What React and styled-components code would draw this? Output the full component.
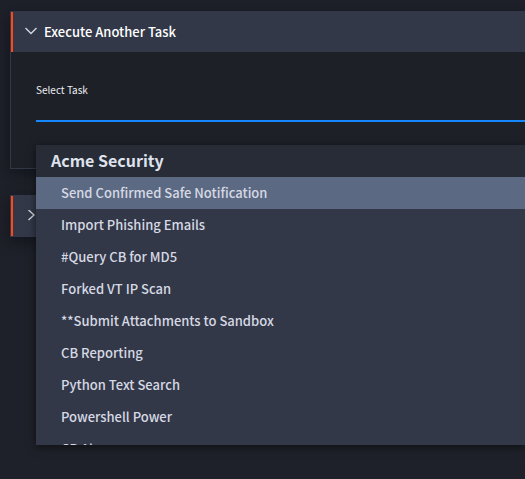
import React, { useState } from "react";
import styled, { createGlobalStyle } from "styled-components";

const GlobalStyle = createGlobalStyle`
  * { box-sizing: border-box; }
  body {
    margin: 0;
    background: #1e2129;
    color: #ffffff;
    font-family: "Noto Sans CJK JP", "Noto Sans", sans-serif;
    overflow: hidden;
  }
`;

const Page = styled.main`
  display: flex;
  flex-direction: column;
  gap: 26px;
  min-height: 100vh;
  padding: 11px 0 0 10px;
`;

const Panel = styled.section`
  border: 1px solid #323848;
  border-right: 0;
  background: #1d2027;
  box-shadow: 0 4px 14px rgba(10, 12, 18, 0.6);
`;

const PanelToggle = styled.button`
  display: flex;
  align-items: center;
  gap: 7px;
  width: 100%;
  height: 40px;
  padding: 0 12px;
  border: 0;
  border-left: 2px solid #ff4719;
  background: #323848;
  color: #ffffff;
  font: 500 13px/20px "Noto Sans CJK JP", "Noto Sans", sans-serif;
  text-align: left;
`;

const Chevron = styled.svg`
  width: 12px;
  height: 12px;
  flex: none;
  fill: none;
  stroke: #d3d5db;
  stroke-width: 1.4;
`;

const PanelBody = styled.div`
  padding: 30px 0 46px 25px;
`;

const Field = styled.div`
  position: relative;
  display: flex;
  flex-direction: column;
`;

const Label = styled.label`
  color: #eceef2;
  font-size: 10px;
  line-height: 16px;
`;

const TaskInput = styled.input`
  width: 100%;
  height: 24px;
  padding: 0;
  border: 0;
  border-bottom: 2px solid #1688ff;
  outline: 0;
  background: transparent;
  color: #dfe2ea;
  font: 500 13px "Noto Sans CJK JP", "Noto Sans", sans-serif;
`;

const Menu = styled.div`
  position: absolute;
  z-index: 1;
  top: calc(100% + 23px);
  left: 0;
  width: 100%;
  max-height: 300px;
  overflow: hidden;
  background: #323848;
  box-shadow: 0 2px 8px rgba(0, 0, 0, 0.55);
`;

const GroupTitle = styled.div`
  padding: 0 15px 2px;
  background: #272c37;
  color: #dfe2ec;
  font-size: 16px;
  font-weight: 700;
  line-height: 30px;
`;

const Option = styled.div`
  padding: 0 25px;
  background: ${({ $active }) => ($active ? "#5b6983" : "transparent")};
  color: #d6d9e3;
  font-size: 13px;
  font-weight: 500;
  line-height: 32px;
  white-space: nowrap;
`;

const tasks = [
  "Send Confirmed Safe Notification",
  "Import Phishing Emails",
  "#Query CB for MD5",
  "Forked VT IP Scan",
  "**Submit Attachments to Sandbox",
  "CB Reporting",
  "Python Text Search",
  "Powershell Power",
  "CB Alarms",
];

export default function App() {
  const [active, setActive] = useState(0);
  return (
    <>
      <GlobalStyle />
      <Page>
        <Panel>
          <PanelToggle type="button" aria-expanded="true">
            <Chevron viewBox="0 0 12 12" aria-hidden="true">
              <path d="M0.5 2 6 7.5 11.5 2" />
            </Chevron>
            Execute Another Task
          </PanelToggle>
          <PanelBody>
            <Field>
              <Label htmlFor="task">Select Task</Label>
              <TaskInput id="task" role="combobox" aria-expanded="true" aria-controls="tasks" />
              <Menu id="tasks" role="listbox" aria-label="Tasks">
                <div role="group" aria-labelledby="tasks-group">
                  <GroupTitle id="tasks-group">Acme Security</GroupTitle>
                  {tasks.map((task, i) => (
                    <Option
                      key={task}
                      role="option"
                      aria-selected={i === active}
                      $active={i === active}
                      onMouseEnter={() => setActive(i)}
                    >
                      {task}
                    </Option>
                  ))}
                </div>
              </Menu>
            </Field>
          </PanelBody>
        </Panel>
        <Panel>
          <PanelToggle type="button" aria-expanded="false" aria-label="Expand panel">
            <Chevron viewBox="0 0 12 12" aria-hidden="true">
              <path d="M3.5 0 9 5 3.5 10" />
            </Chevron>
          </PanelToggle>
        </Panel>
      </Page>
    </>
  );
}
